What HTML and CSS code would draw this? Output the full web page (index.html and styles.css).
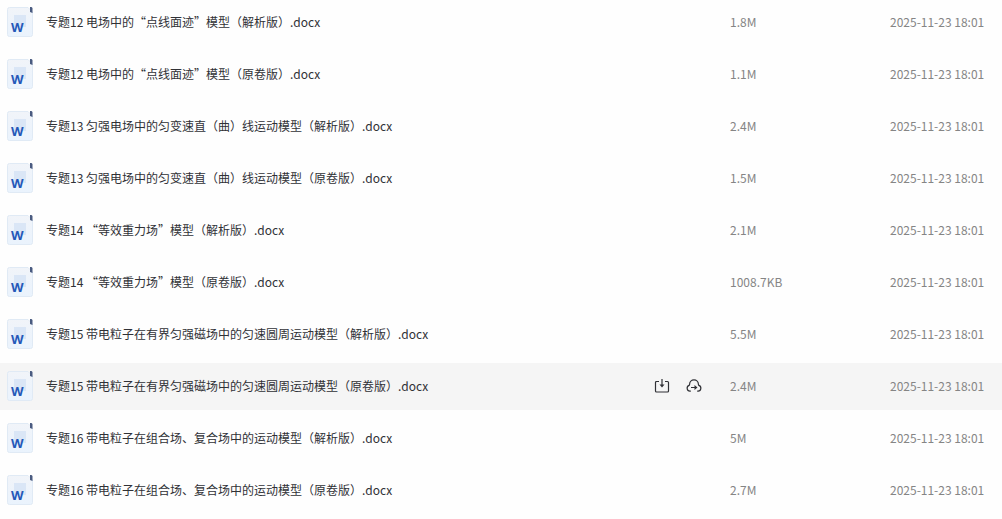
FILE: index.html
```html
<!DOCTYPE html>
<html lang="zh-CN">
<head>
<meta charset="utf-8">
<meta name="viewport" content="width=device-width, initial-scale=1">
<title>文件列表</title>
<link rel="stylesheet" href="styles.css">
</head>
<body>
<svg class="sprite" aria-hidden="true">
  <defs>
    <linearGradient id="paper" x1="0" y1="0" x2="0" y2="1">
      <stop offset="0" stop-color="#f1f4f9"/>
      <stop offset="1" stop-color="#eaf3fd"/>
    </linearGradient>
    <symbol id="word" viewBox="0 0 28 32">
      <path d="M3.500 1.500H22l4.500 4.500V28.500a2 2 0 0 1-2 2H3.500a2 2 0 0 1-2-2V3.500a2 2 0 0 1 2-2Z" fill="url(#paper)" stroke="#e0eaf5"/>
      <path d="M8 9h12v12H8z" fill="#dae6f6"/>
      <path d="M24 1h1.500l1 1v5l-2.500-1z" fill="#4a5b80"/>
      <text x="5" y="26" class="word-mark">W</text>
    </symbol>
  </defs>
</svg>
<table class="files">
  <tbody>
    <tr class="file"><td class="name"><div class="name-inner"><svg class="doc" aria-hidden="true"><use href="#word"/></svg><a href="#">专题12 电场中的“点线面迹”模型（解析版）.docx</a></div></td><td class="actions"></td><td class="size">1.8M</td><td class="date">2025-11-23 18:01</td></tr>
    <tr class="file"><td class="name"><div class="name-inner"><svg class="doc" aria-hidden="true"><use href="#word"/></svg><a href="#">专题12 电场中的“点线面迹”模型（原卷版）.docx</a></div></td><td class="actions"></td><td class="size">1.1M</td><td class="date">2025-11-23 18:01</td></tr>
    <tr class="file"><td class="name"><div class="name-inner"><svg class="doc" aria-hidden="true"><use href="#word"/></svg><a href="#">专题13 匀强电场中的匀变速直（曲）线运动模型（解析版）.docx</a></div></td><td class="actions"></td><td class="size">2.4M</td><td class="date">2025-11-23 18:01</td></tr>
    <tr class="file"><td class="name"><div class="name-inner"><svg class="doc" aria-hidden="true"><use href="#word"/></svg><a href="#">专题13 匀强电场中的匀变速直（曲）线运动模型（原卷版）.docx</a></div></td><td class="actions"></td><td class="size">1.5M</td><td class="date">2025-11-23 18:01</td></tr>
    <tr class="file"><td class="name"><div class="name-inner"><svg class="doc" aria-hidden="true"><use href="#word"/></svg><a href="#">专题14 “等效重力场”模型（解析版）.docx</a></div></td><td class="actions"></td><td class="size">2.1M</td><td class="date">2025-11-23 18:01</td></tr>
    <tr class="file"><td class="name"><div class="name-inner"><svg class="doc" aria-hidden="true"><use href="#word"/></svg><a href="#">专题14 “等效重力场”模型（原卷版）.docx</a></div></td><td class="actions"></td><td class="size">1008.7KB</td><td class="date">2025-11-23 18:01</td></tr>
    <tr class="file"><td class="name"><div class="name-inner"><svg class="doc" aria-hidden="true"><use href="#word"/></svg><a href="#">专题15 带电粒子在有界匀强磁场中的匀速圆周运动模型（解析版）.docx</a></div></td><td class="actions"></td><td class="size">5.5M</td><td class="date">2025-11-23 18:01</td></tr>
    <tr class="file active"><td class="name"><div class="name-inner"><svg class="doc" aria-hidden="true"><use href="#word"/></svg><a href="#">专题15 带电粒子在有界匀强磁场中的匀速圆周运动模型（原卷版）.docx</a></div></td><td class="actions"><div class="buttons">
      <button type="button" aria-label="下载"><svg viewBox="0 0 16 16" aria-hidden="true"><path d="M5 3.500H2.500a1 1 0 0 0-1 1V13a1 1 0 0 0 1 1h11a1 1 0 0 0 1-1V4.500a1 1 0 0 0-1-1H11M8 1v7"/><path class="solid" d="M5.500 6.500h5L8 9.500z"/></svg></button>
      <button type="button" aria-label="转存"><svg viewBox="0 0 16 16" aria-hidden="true"><path d="M4.800 13.200H3.900a3 3 0 0 1-.8-5.800Q3.500 7.100 3.600 6.200a4.400 4.400 0 0 1 8.800 0Q12.500 7.100 12.900 7.400a3 3 0 0 1-.8 5.800h-.9M5 9.500h5"/><path class="solid" d="M8.500 7v5l3-2.500z"/></svg></button>
    </div></td><td class="size">2.4M</td><td class="date">2025-11-23 18:01</td></tr>
    <tr class="file"><td class="name"><div class="name-inner"><svg class="doc" aria-hidden="true"><use href="#word"/></svg><a href="#">专题16 带电粒子在组合场、复合场中的运动模型（解析版）.docx</a></div></td><td class="actions"></td><td class="size">5M</td><td class="date">2025-11-23 18:01</td></tr>
    <tr class="file"><td class="name"><div class="name-inner"><svg class="doc" aria-hidden="true"><use href="#word"/></svg><a href="#">专题16 带电粒子在组合场、复合场中的运动模型（原卷版）.docx</a></div></td><td class="actions"></td><td class="size">2.7M</td><td class="date">2025-11-23 18:01</td></tr>
  </tbody>
</table>
</body>
</html>
```
FILE: styles.css
```css
body {
  margin: 0;
  background: #fefefe;
  color: #303136;
  font: 12px/18px "Noto Sans CJK SC", sans-serif;
}

.sprite {
  position: absolute;
  width: 0;
  height: 0;
}

.word-mark {
  font: bold 13px "Noto Sans", sans-serif;
  fill: #2458b8;
}

.files {
  width: 100%;
  margin-top: -6px;
  table-layout: fixed;
  border-spacing: 0 5px;
}

.file td {
  box-sizing: border-box;
  height: 47px;
  padding: 0 0 2px;
  white-space: nowrap;
}

.file.active td {
  background: #f5f5f5;
}

.name-inner {
  display: flex;
  align-items: center;
  gap: 12px;
  padding-left: 6px;
}

.doc {
  flex: none;
  width: 28px;
  height: 32px;
}

.name a {
  color: inherit;
  text-decoration: none;
}

.file .actions {
  width: 76px;
}

.buttons {
  display: flex;
  gap: 16px;
}

.buttons button {
  width: 16px;
  height: 16px;
  padding: 0;
  border: 0;
  background: none;
  color: #303136;
  cursor: pointer;
}

.buttons svg {
  display: block;
  width: 16px;
  height: 16px;
  fill: none;
  stroke: currentColor;
  stroke-width: 1.2;
}

.buttons .solid {
  fill: currentColor;
  stroke: none;
}

.file .size {
  width: 160px;
  color: #858585;
}

.file .date {
  width: 112px;
  color: #858585;
}
```
